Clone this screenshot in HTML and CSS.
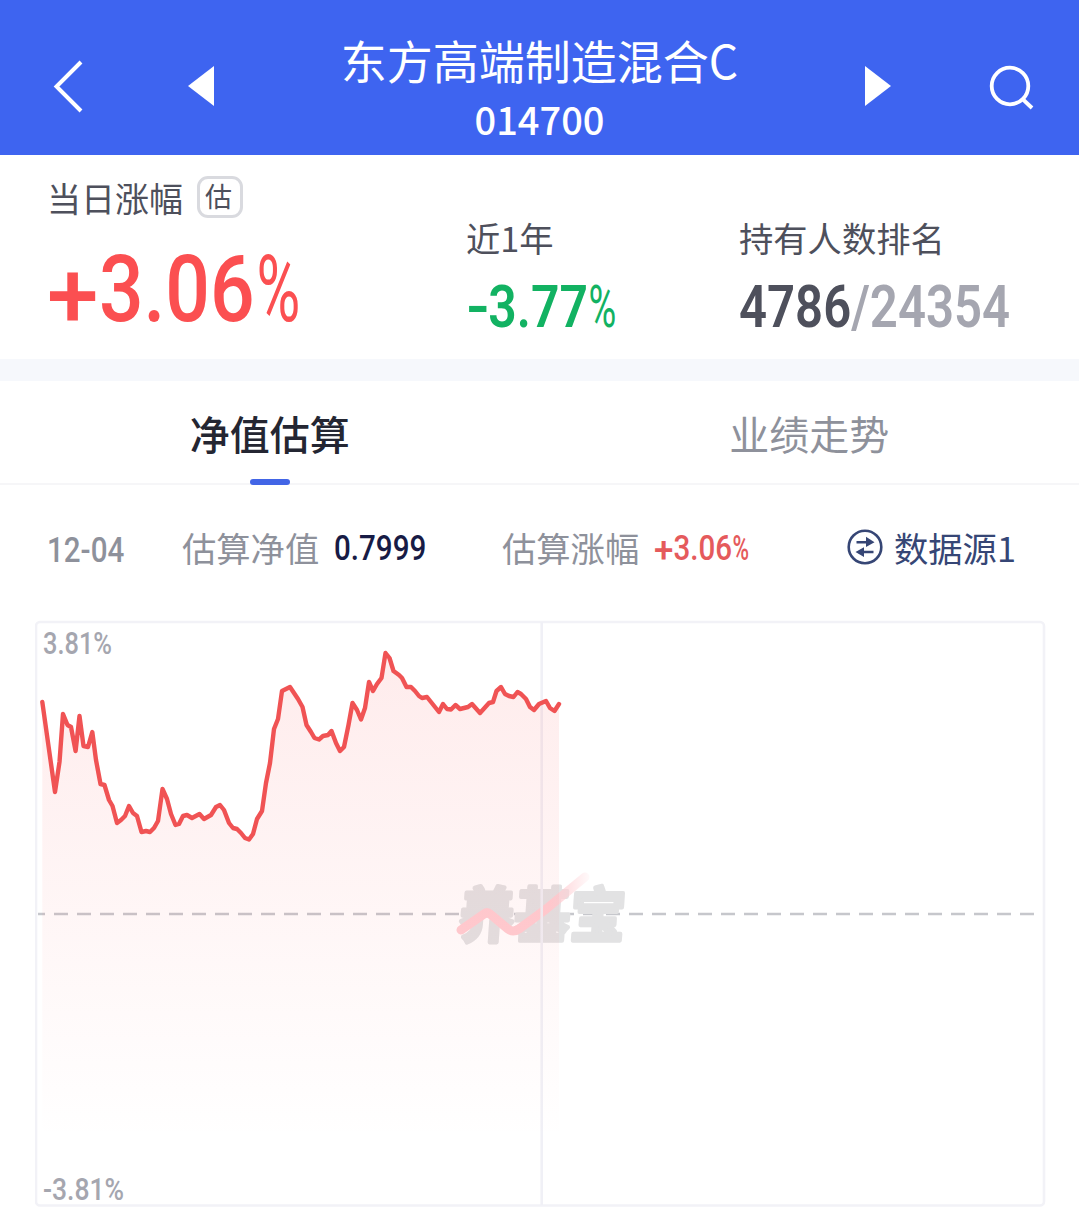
FILE: index.html
```html
<!DOCTYPE html>
<html lang="zh-CN">
<head>
  <meta charset="UTF-8">
  <title>东方高端制造混合C</title>
  <link rel="stylesheet" href="styles.css">
</head>
<body>
  <header class="header">
    <svg class="icon-back" width="34" height="56" viewBox="0 0 34 56">
      <path d="M31 4 L6.5 28.5 L31 53" fill="none" stroke="#fff" stroke-width="4" />
    </svg>
    <svg class="icon-prev" width="26" height="40" viewBox="0 0 26 40">
      <path d="M26 0 V40 L0 20 Z" fill="#fff" />
    </svg>
    <div class="title">
      <h1>东方高端制造混合C</h1>
      <div class="code">014700</div>
    </div>
    <svg class="icon-next" width="26" height="40" viewBox="0 0 26 40">
      <path d="M0 0 V40 L26 20 Z" fill="#fff" />
    </svg>
    <svg class="icon-search" width="46" height="46" viewBox="0 0 46 46" fill="none" stroke="#fff" stroke-width="3.8">
      <circle cx="21" cy="22" r="18.3" />
      <path d="M33 34.5 L43 44" />
    </svg>
  </header>

  <section class="stats">
    <div class="stat stat-today">
      <div class="label">当日涨幅 <span class="badge">估</span></div>
      <div class="num num-big red"><span class="plus">+</span>3.06<span class="pct">%</span></div>
    </div>
    <div class="stat stat-year">
      <div class="label">近1年</div>
      <div class="num num-mid green"><span class="minus">-</span>3.77<span class="pct">%</span></div>
    </div>
    <div class="stat stat-rank">
      <div class="label">持有人数排名</div>
      <div class="num num-mid rank">4786<span class="total">/24354</span></div>
    </div>
  </section>

  <nav class="tabs">
    <div class="tab active">净值估算</div>
    <div class="tab">业绩走势</div>
  </nav>

  <div class="info">
    <span class="num date">12-04</span>
    <span class="info-label">估算净值</span>
    <span class="num info-value">0.7999</span>
    <span class="info-label">估算涨幅</span>
    <span class="num info-rate"><span class="plus">+</span>3.06<span class="pct">%</span></span>
    <svg class="icon-swap" width="36" height="36" viewBox="0 0 36 36">
      <circle cx="18" cy="18" r="16.3" fill="none" stroke="#364675" stroke-width="2.6" />
      <path d="M9.5 13.2 H20 M16 23 H26.5" fill="none" stroke="#364675" stroke-width="2.6" />
      <path d="M19 7.8 L27.5 13.2 L19 18 Z M17 18.2 V28 L8.5 23 Z" fill="#364675" />
    </svg>
    <span class="source">数据源1</span>
  </div>

  <div class="chart">
    <svg width="1011" height="587" viewBox="35 620 1011 587">
      <defs>
        <linearGradient id="area" x1="0" y1="653" x2="0" y2="1140" gradientUnits="userSpaceOnUse">
          <stop offset="0" stop-color="#fb4f51" stop-opacity="0.11" />
          <stop offset="1" stop-color="#fb4f51" stop-opacity="0" />
        </linearGradient>
        <linearGradient id="arrow" x1="458" y1="0" x2="590" y2="0" gradientUnits="userSpaceOnUse">
          <stop offset="0.7" stop-color="#ffced3" />
          <stop offset="1" stop-color="#ffced3" stop-opacity="0.1" />
        </linearGradient>
      </defs>

      <line x1="38" y1="914" x2="1043" y2="914" stroke="#c6c7cc" stroke-width="2.6" stroke-dasharray="14 9" stroke-dashoffset="7" />

      <!-- watermark -->
      <text class="watermark" transform="translate(458 937) skewX(-4) scale(1 1.08)" textLength="166">养基宝</text>
      <path d="M461 930 L484 914 Q487 911 490 914 L508 929 Q513 933 519 929 L545 910 L585 877" fill="none" stroke="url(#arrow)" stroke-width="9" stroke-linecap="round" />

      <rect x="36" y="622" width="1008" height="583.5" rx="4" fill="none" stroke="#f2f2f7" stroke-width="2.6" />
      <line x1="541.7" y1="622" x2="541.7" y2="1205" stroke="#f0f0f6" stroke-width="2.6" />

      <path d="M42.3 702 L55 792 59.5 762 63 714 67.5 725 71 727 75.6 751 79.5 716 83.5 746 88 747 92.3 732 96 760 100.5 784 104.5 785 109 800 112.5 806 117 823 121 820 125 816 129 806 133 813 137 816 141.5 832 146 831 150 832 154 828 158 821 162.5 789 167 799 171 814 175.5 825 179 824 183 816 187 815 192 818 199.5 814 204 819 211 815 216 807 220 805 224 810 229 823 233 828 237 829 241 833 245 838 249 839.5 253 834 257 819 262 811 266 783 270 763 274 729 278 719 282 691 290 687 298 699 302.5 707 306.5 725 311 732 314.5 738 319 739.5 323 736 328 735 331.5 731 336 743 340 751 344 747 348.5 725 352.5 703 357 710 361 719.5 365 708 369 682 373 691 377 684 381.5 678 385.5 653 389.5 658 393.5 671 399 675 402 678 406.5 687 411 687 415 691 419 696 422 698 427 697 431 702 439 712 443 704 447 709 451 709.5 455.5 705 460 709 468 707 472 704 480 713 484.5 708 489 703 493 702 496.5 691 501 687 505 694 509 696 513.5 697 517.5 692 521 694 526 699 530 707 534 710 539 704 546 701 550 708 554.5 711 559 704 V1140 H42.3 Z" fill="url(#area)" />
      <polyline points="42.3,702 55,792 59.5,762 63,714 67.5,725 71,727 75.6,751 79.5,716 83.5,746 88,747 92.3,732 96,760 100.5,784 104.5,785 109,800 112.5,806 117,823 121,820 125,816 129,806 133,813 137,816 141.5,832 146,831 150,832 154,828 158,821 162.5,789 167,799 171,814 175.5,825 179,824 183,816 187,815 192,818 199.5,814 204,819 211,815 216,807 220,805 224,810 229,823 233,828 237,829 241,833 245,838 249,839.5 253,834 257,819 262,811 266,783 270,763 274,729 278,719 282,691 290,687 298,699 302.5,707 306.5,725 311,732 314.5,738 319,739.5 323,736 328,735 331.5,731 336,743 340,751 344,747 348.5,725 352.5,703 357,710 361,719.5 365,708 369,682 373,691 377,684 381.5,678 385.5,653 389.5,658 393.5,671 399,675 402,678 406.5,687 411,687 415,691 419,696 422,698 427,697 431,702 439,712 443,704 447,709 451,709.5 455.5,705 460,709 468,707 472,704 480,713 484.5,708 489,703 493,702 496.5,691 501,687 505,694 509,696 513.5,697 517.5,692 521,694 526,699 530,707 534,710 539,704 546,701 550,708 554.5,711 559,704" fill="none" stroke="#f05354" stroke-width="4.4" stroke-linejoin="round" stroke-linecap="round" />

      <text class="axis" x="43" y="654" textLength="69" lengthAdjust="spacingAndGlyphs">3.81%</text>
      <text class="axis" x="43" y="1200" textLength="81" lengthAdjust="spacingAndGlyphs">-3.81%</text>
    </svg>
  </div>
</body>
</html>
```
FILE: styles.css
```css
* {
  box-sizing: border-box;
}
body {
  margin: 0;
  background: #fff;
  color: #4e505c;
  font-family: "Noto Sans CJK SC", sans-serif;
  overflow: hidden;
}
svg {
  display: block;
  flex: none;
}
.header {
  display: flex;
  height: 155px;
  padding: 0 44px 0 50px;
  background: #3e64f0;
  color: #fff;
}
.icon-back {
  margin-top: 58px;
}
.icon-prev {
  margin: 66px 0 0 104px;
}
.title {
  flex: 1;
  text-align: center;
}
.title h1 {
  margin: 31px 0 0;
  font-size: 46px;
  line-height: 56px;
  font-weight: 400;
}
.code {
  font-size: 38px;
  line-height: 46px;
  margin-top: 9px;
  font-weight: 500;
}
.icon-next {
  margin: 66px 98px 0 0;
}
.icon-search {
  margin-top: 64px;
}
.stats {
  display: grid;
  grid-template-columns: 419px 273px 1fr;
  height: 226px;
  padding-left: 47px;
  border-bottom: 22px solid #f6f8fc;
}
.label {
  display: flex;
  align-items: center;
  height: 44px;
  font-size: 34.3px;
  white-space: nowrap;
}
.stat-today {
  padding-top: 20px;
}
.stat-today .label {
  font-size: 34px;
}
.stat-year,
.stat-rank {
  padding-top: 60px;
}
.badge {
  width: 46px;
  height: 42px;
  margin-left: 14px;
  border: 3px solid #d9dadf;
  border-radius: 11px;
  font-size: 27px;
  line-height: 34px;
  text-align: center;
  text-indent: -3px;
}
/* narrow digits */
.num {
  font-family: Roboto, sans-serif;
  font-weight: 500;
  white-space: nowrap;
  transform: scaleX(0.845);
  transform-origin: 0 50%;
}
.plus,
.minus,
.pct {
  display: inline-block;
  transform-origin: 0 50%;
}
.plus {
  margin-right: 0.105em;
  transform: translateY(0.06em) scaleX(1.18);
}
.minus {
  margin-right: 0.08em;
  transform: scaleX(1.3);
}
.pct {
  margin-left: 0.02em;
  transform: scaleX(0.76);
  font-weight: 400;
}
.num-big {
  margin-top: 16px;
  font-size: 93px;
  line-height: 110px;
}
.num-mid {
  margin-top: 13px;
  font-size: 59px;
  line-height: 70px;
  font-weight: 600;
}
.rank {
  transform: scaleX(0.832);
}
.red {
  color: #fb4f51;
}
.green {
  color: #12b262;
}
.total {
  color: #a5a6b0;
}
.tabs {
  display: flex;
  height: 104px;
  border-bottom: 2px solid #f6f6f8;
}
.tab {
  position: relative;
  flex: 1;
  font-size: 40px;
  line-height: 105px;
  text-align: center;
  color: #8e919b;
}
.tab.active {
  color: #242632;
  font-weight: 500;
}
.tab.active::after {
  content: "";
  position: absolute;
  left: 50%;
  bottom: -2px;
  width: 40px;
  height: 6px;
  margin-left: -20px;
  border-radius: 3px;
  background: #4265e6;
}
.info {
  display: flex;
  align-items: center;
  height: 124px;
  padding-left: 47px;
  font-size: 34.3px;
  color: #8e919b;
}
.info .num {
  flex: none;
  padding-top: 3px;
  font-size: 35px;
}
.info-label {
  flex: none;
  width: 152px;
}
.info .date {
  width: 135px;
  padding-top: 7px;
}
.info .info-value {
  width: 168px;
  color: #171b45;
}
.info .info-rate {
  width: 193px;
  color: #e55a5c;
}
.info-rate .pct {
  font-weight: 500;
}
.source {
  margin-left: 11px;
  color: #364675;
}
.chart {
  margin: 11px 0 0 35px;
}
.axis {
  font-family: Roboto, sans-serif;
  font-size: 31px;
  font-weight: 500;
  fill: #a5a6af;
}
.watermark {
  font-size: 55px;
  font-weight: 700;
  fill: #e2e2e3;
  stroke: #e2e2e3;
  stroke-width: 4;
  stroke-linejoin: round;
}
```
